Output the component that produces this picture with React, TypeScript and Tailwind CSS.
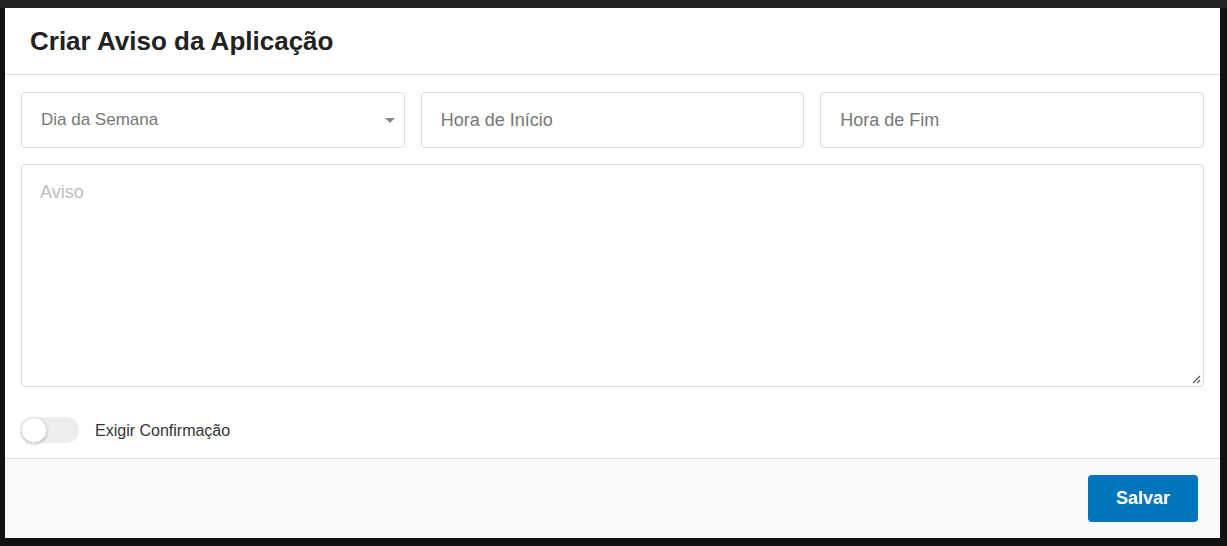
export default function App() {
  return (
    <div className="h-[546px] w-[1227px] overflow-hidden bg-[#111111] font-['Liberation_Sans',Arial,sans-serif]">
      <div className="h-[8px] bg-[#232323]" />
      <div className="ml-[5px] flex h-[530px] w-[1215px] flex-col bg-white">
        {/* header */}
        <div className="flex h-[67px] shrink-0 items-center border-b border-[#dedede] px-[25px]">
          <h1 className="text-[26px] font-bold text-[#222222]">Criar Aviso da Aplicação</h1>
        </div>

        {/* body */}
        <div className="flex flex-1 flex-col px-[16px] pt-[17px]">
          <div className="grid grid-cols-3 gap-[16px]">
            <div className="relative flex h-[56px] items-center rounded-[4px] border border-[#dcdcdc] pl-[19px]">
              <span className="text-[17px] text-[#777777]">Dia da Semana</span>
              <span className="absolute right-[9px] top-[25px] h-0 w-0 border-x-[5px] border-t-[5px] border-x-transparent border-t-[#888888]" />
            </div>
            <div className="flex h-[56px] items-center rounded-[4px] border border-[#dcdcdc] pl-[19px]">
              <span className="text-[18px] text-[#777777]">Hora de Início</span>
            </div>
            <div className="flex h-[56px] items-center rounded-[4px] border border-[#dcdcdc] pl-[19px]">
              <span className="text-[18px] text-[#777777]">Hora de Fim</span>
            </div>
          </div>

          <div className="relative mt-[16px] h-[223px] rounded-[4px] border border-[#dcdcdc] px-[18px] pt-[14px]">
            <span className="text-[18px] text-[#bdbdbd]">Aviso</span>
            <svg className="absolute bottom-[2px] right-[2px]" width="10" height="10" viewBox="0 0 10 10">
              <path d="M9 2 L2 9 M9 6 L6 9" stroke="#555555" strokeWidth="1.2" />
            </svg>
          </div>

          <div className="mt-[29px] flex items-center gap-[16px]">
            <div className="relative h-[26px] w-[58px] rounded-full bg-[#eeeeee]">
              <div className="absolute left-0 top-0 h-[26px] w-[26px] rounded-full border border-[#e4e4e4] bg-white shadow-[0_1px_3px_rgba(0,0,0,0.25)]" />
            </div>
            <span className="pt-[3px] text-[16px] text-[#333333]">Exigir Confirmação</span>
          </div>
        </div>

        {/* footer */}
        <div className="flex h-[80px] shrink-0 items-center justify-end border-t border-[#dedede] bg-[#f8f9fa] pr-[22px]">
          <button className="h-[47px] w-[110px] rounded-[4px] bg-[#0075be] text-[18px] font-bold text-white">
            Salvar
          </button>
        </div>
      </div>
    </div>
  );
}
